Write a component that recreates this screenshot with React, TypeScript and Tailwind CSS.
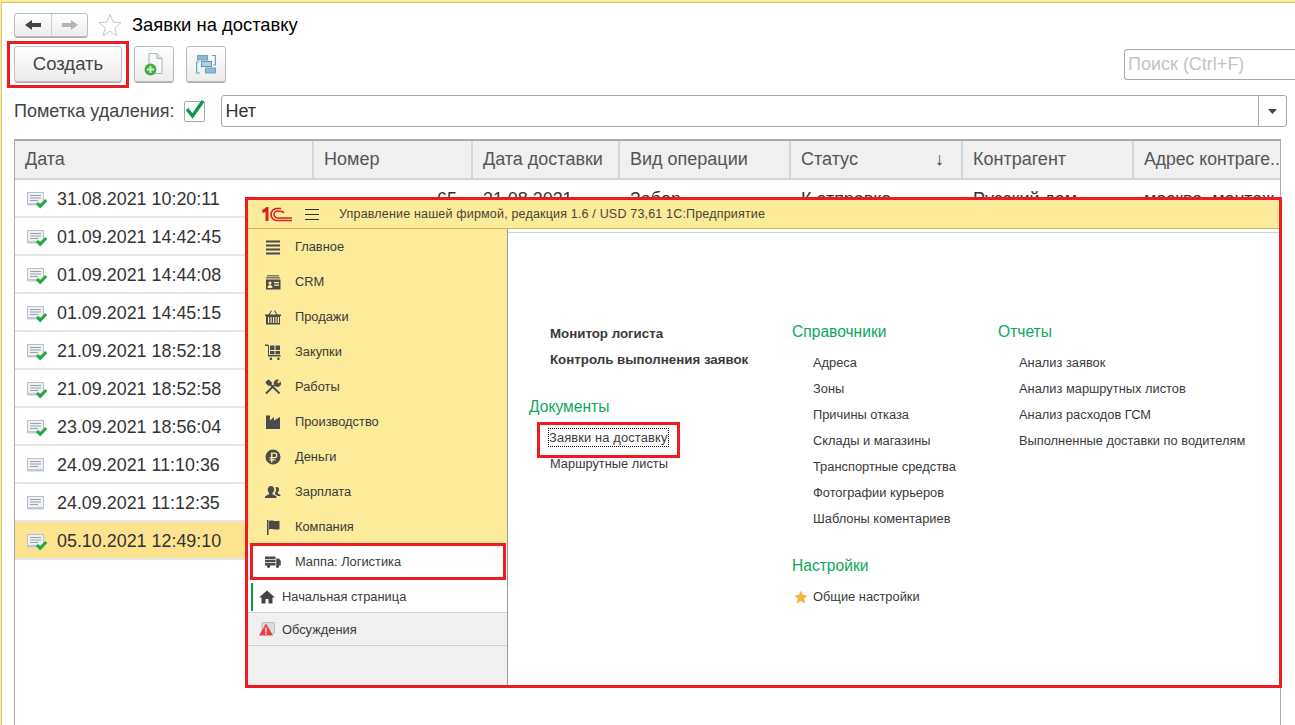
import type { ReactNode } from "react"

const font = "font-['Liberation_Sans',Arial,sans-serif]"

const rows = [
  { date: "31.08.2021 10:20:11", done: true },
  { date: "01.09.2021 14:42:45", done: true },
  { date: "01.09.2021 14:44:08", done: true },
  { date: "01.09.2021 14:45:15", done: true },
  { date: "21.09.2021 18:52:18", done: true },
  { date: "21.09.2021 18:52:58", done: true },
  { date: "23.09.2021 18:56:04", done: true },
  { date: "24.09.2021 11:10:36", done: false },
  { date: "24.09.2021 11:12:35", done: false },
  { date: "05.10.2021 12:49:10", done: true, selected: true },
]

const columns = [
  { title: "Дата", width: "w-[299px] shrink-0" },
  { title: "Номер", width: "w-[159px] shrink-0" },
  { title: "Дата доставки", width: "w-[147px] shrink-0" },
  { title: "Вид операции", width: "w-[171px] shrink-0" },
  { title: "Статус", width: "w-[172px] shrink-0", sort: true },
  { title: "Контрагент", width: "w-[171px] shrink-0" },
  { title: "Адрес контраге..", width: "min-w-0 flex-1 text-[17.6px]" },
]

function DocIcon({ done }: { done: boolean }) {
  return (
    <svg width="21" height="18" viewBox="0 0 21 18" className="mt-[2px] shrink-0">
      <rect x="0.5" y="1.5" width="16" height="12" fill="#eef1f4" stroke="#b9c1c9" />
      <rect x="1" y="12" width="16" height="2.5" fill="#c3cad1" />
      <path d="M3 4.5h11M3 7h11M3 9.500h8" stroke="#9aa3ad" strokeWidth="1" />
      {done && <path d="M10 12l3.200 3.400L19.200 9" fill="none" stroke="#27a642" strokeWidth="3" />}
    </svg>
  )
}

function ToolButton({ children }: { children: ReactNode }) {
  return (
    <button className="flex h-[36px] w-[40px] items-center justify-center rounded-[3px] border border-[#bdbdbd] bg-gradient-to-b from-white to-[#ececec] shadow-[0_1px_0_#aaa]">
      {children}
    </button>
  )
}

function Toolbar() {
  return (
    <div className="flex h-[36px] items-center pl-[14px]">
      <div className="relative">
        <button className="h-[36px] w-[108px] rounded-[3px] border border-[#bdbdbd] bg-gradient-to-b from-white to-[#ececec] text-[18.5px] text-[#444] shadow-[0_1px_0_#aaa]">
          Создать
        </button>
        <span className="absolute -left-[7px] -top-[5px] h-[47px] w-[122px] border-[3px] border-[#ed1c24]" />
      </div>
      <div className="ml-[12px]">
        <ToolButton>
          <svg width="20" height="24" viewBox="0 0 20 24">
            <path d="M5 1.500h8l5 5v15H5z" fill="#f7f8fa" stroke="#aeb6bf" />
            <path d="M13 1.500v5h5" fill="#dfe3e8" stroke="#aeb6bf" />
            <circle cx="6.500" cy="17.500" r="6" fill="#48ad45" />
            <path d="M6.500 14v7M3 17.500h7" stroke="#d8f3d4" strokeWidth="1.800" />
          </svg>
        </ToolButton>
      </div>
      <div className="ml-[12px]">
        <ToolButton>
          <svg width="20" height="20" viewBox="0 0 20 20">
            <path d="M3 8H.6v11H4M16 1.500h3.400V11H17" fill="none" stroke="#6fa3c6" strokeWidth="1.200" />
            <rect x="1.500" y="1.500" width="10" height="4.500" fill="#8fb8d3" stroke="#6fa3c6" />
            <rect x="5.500" y="7.500" width="10" height="5" fill="#b4d0e3" stroke="#5f97bd" />
            <rect x="9.500" y="14" width="10" height="5" fill="#8fb8d3" stroke="#6fa3c6" />
          </svg>
        </ToolButton>
      </div>
      <div className="ml-auto flex h-[31px] w-[171px] items-center rounded-l-[3px] border border-r-0 border-[#a8a8a8] pl-[3px] text-[18px] text-[#c4c4c4]">
        Поиск (Ctrl+F)
      </div>
    </div>
  )
}

function Table() {
  return (
    <div className="mx-[14px] mt-[12px] flex flex-1 flex-col border-x border-t-2 border-[#a9a9a9]">
      <div className="flex h-[39px] shrink-0 border-b-2 border-[#d2d2d2] bg-[#f0f0f0] text-[18px] text-[#555]">
        {columns.map((c) => (
          <div
            key={c.title}
            className={`flex items-center justify-between whitespace-nowrap border-r-2 border-[#d6d6d6] pl-[10px] pr-[17px] last:border-r-0 last:pr-0 ${c.width}`}
          >
            <span>{c.title}</span>
            {c.sort && <span className="text-[18px] text-[#444]">↓</span>}
          </div>
        ))}
      </div>
      {rows.map((r, i) => (
        <div
          key={r.date}
          className={`flex h-[38px] shrink-0 items-center border-b-2 border-[#e6e6e6] pl-[12px] pt-[2px] text-[17.9px] text-[#333] ${r.selected ? "bg-[#fde28f]" : ""}`}
        >
          <DocIcon done={r.done} />
          <span className="ml-[9px] w-[163px] whitespace-nowrap">{r.date}</span>
          {i === 0 && (
            <div className="flex flex-1 items-center whitespace-nowrap">
              <span className="w-[263px] pr-[26px] text-right">65</span>
              <span className="w-[147px]">31.08.2021</span>
              <span className="w-[171px]">Забор</span>
              <span className="w-[172px]">К отправке</span>
              <span className="w-[171px]">Русский дом</span>
              <span>москва, монтаж</span>
            </div>
          )}
        </div>
      ))}
    </div>
  )
}

type IconProps = { name: string }

function MenuIcon({ name }: IconProps) {
  const fill = "#4b4b4b"
  return (
    <svg width="16" height="16" viewBox="0 0 16 16" fill={fill}>
      {name === "main" && <path d="M1 1.500h14v2H1zM1 5.500h14v2H1zM1 9.500h14v2H1zM1 13.500h14v2H1z" />}
      {name === "crm" && (
        <>
          <path d="M2 1h12v1.500H2zM1 3h14v1.500H1z" opacity="0.7" />
          <path fillRule="evenodd" d="M1 5.500h14.500V15.500H1zM5 7.500a1.600 1.600 0 100 3.200 1.600 1.600 0 000-3.200zM2.500 14h5c0-2-1-3-2.500-3s-2.500 1-2.500 3zM9 8v1.200h5V8zM9 10.500v1.200h5v-1.200z" />
        </>
      )}
      {name === "sales" && (
        <path fillRule="evenodd" d="M3.500 5.500L6 1.500h1L4.800 5.500h6.400L9 1.500h1l2.500 4H16v1.500h-1v8.500H1V7H0V5.500zM3 8v6h1.200V8zM5.500 8v6h1.200V8zM8 8v6h1.200V8zM10.500 8v6h1.200V8zM12.800 8v6H14V8z" />
      )}
      {name === "buy" && (
        <path d="M0 0.500h3l1 1v9.500h11.500v1.500H3V2H0zM5 1.500h4.500V6H5zM10.500 1.500H15V6h-4.500zM5 7h4.500v3.200H5zM10.500 7H15v3.200h-4.500zM5.500 13.500a1.300 1.300 0 110 2.500 1.300 1.300 0 010-2.500zM13 13.500a1.300 1.300 0 110 2.500 1.300 1.300 0 010-2.500z" />
      )}
      {name === "work" && (
        <g fill="none" stroke={fill}>
          <path d="M1 14.500L9.500 6" strokeWidth="1.800" />
          <path d="M14.500 14.500L5 5" strokeWidth="1.800" />
          <path d="M1.500 2L4 .800 7 4 4 7 .800 4z" fill={fill} strokeWidth="0.500" />
          <path d="M9 5a3.500 3.500 0 014.800-4l-2 2 1.700 1.700 2-2A3.500 3.500 0 0111 7.500z" fill={fill} strokeWidth="0.500" />
        </g>
      )}
      {name === "prod" && <path d="M1 1.500h4v5L9 3v3.500l6-3.500v12H1z" />}
      {name === "money" && (
        <path fillRule="evenodd" d="M8 .500a7.500 7.500 0 110 15 7.500 7.500 0 010-15zM6 3.500V8H4.500v1.300H6v1H4.500v1.200H6V13.500h1.500v-2h3v-1.200h-3v-1h2a2.900 2.900 0 000-5.800zM7.500 4.800h2a1.600 1.600 0 010 3.200h-2z" />
      )}
      {name === "pay" && (
        <path d="M6 2a3.200 3.200 0 013.200 3.500c0 1.500-.7 2.800-1.700 3.500v1.200l3 1.500c.8.400 1 1 1 2.300H0c0-1.300.2-1.900 1-2.300l3-1.500V9C3 8.300 2.800 7 2.800 5.500A3.200 3.200 0 016 2zM11.500 3a2.500 2.500 0 012.500 2.800c0 1-.5 2-1.200 2.600v1l2 1c.6.300.7.800.7 1.600h-2.500l-3-1.800V8.600c1-1 1.500-3 .5-5.200.3-.2.600-.4 1-.4z" />
      )}
      {name === "company" && <path d="M2 1h1.500v15H2zM4 2c3-1.500 5 1 10.500-.3v8.500C9 11.500 7 9 4 10.500z" />}
      {name === "truck" && (
        <path d="M0 2.500h10.500v2.600H0zM0 5.700h10.500v2.600H0zM0 9h10.500v2.500H0zM11.200 4.500h2.800l1.800 2.500v4.500h-4.600zM3.500 10.500a1.700 1.700 0 110 3.400 1.700 1.700 0 010-3.400zM12.500 10.500a1.700 1.700 0 110 3.400 1.700 1.700 0 010-3.400z" />
      )}
    </svg>
  )
}

function Overlay() {
  const items = [
    { name: "main", label: "Главное" },
    { name: "crm", label: "CRM" },
    { name: "sales", label: "Продажи" },
    { name: "buy", label: "Закупки" },
    { name: "work", label: "Работы" },
    { name: "prod", label: "Производство" },
    { name: "money", label: "Деньги" },
    { name: "pay", label: "Зарплата" },
    { name: "company", label: "Компания" },
  ]
  return (
    <div className="absolute left-[245px] top-[197px] flex h-[491px] w-[1037px] flex-col border-[3px] border-[#ed1c24] bg-white text-[12.85px] text-[#3a3a3a]">
      <div className="flex h-[29px] shrink-0 items-center border-b border-[#c8b866] bg-[#fbeb9b] pl-[14px] text-[12.5px] text-[#4a4433]">
        <svg width="30" height="15" viewBox="0 0 30 15" fill="none">
          <path d="M.5 5L5 1.500V14" stroke="#d8232a" strokeWidth="3" />
          <path d="M19 1.500h-4a6 6 0 000 12h15" stroke="#d8232a" strokeWidth="1.700" />
          <path d="M22 6c-1-1.800-3.500-2-6.500-2a3.500 3.500 0 000 7H30" stroke="#d8232a" strokeWidth="1.500" />
        </svg>
        <svg width="14" height="13" viewBox="0 0 14 13" className="ml-[13px]">
          <path d="M0 1.500h14M0 6.500h14M0 11.500h14" stroke="#333" strokeWidth="1" />
        </svg>
        <span className="ml-[20px] whitespace-nowrap tracking-[0.18px]">
          Управление нашей фирмой, редакция 1.6 / USD 73,61 1С:Предприятие
        </span>
      </div>
      <div className="flex min-h-0 flex-1">
        <div className="flex w-[260px] shrink-0 flex-col border-r border-[#999] bg-[#f0f0f0]">
          <div className="flex flex-col bg-[#fbeb9b]">
            {items.map((it) => (
              <div key={it.name} className="flex h-[35px] items-center pl-[17px]">
                <MenuIcon name={it.name} />
                <span className="ml-[14px]">{it.label}</span>
              </div>
            ))}
          </div>
          <div className="relative -mt-[1px] ml-[2px] mr-[1px] flex h-[37px] shrink-0 items-center border-[3px] border-[#ed1c24] bg-white pl-[12px]">
            <MenuIcon name="truck" />
            <span className="ml-[14px]">Маппа: Логистика</span>
          </div>
          <div className="flex h-[33px] shrink-0 items-center border-b border-[#d2d2d2] bg-white pt-[1px]">
            <div className="ml-[3px] h-[28px] w-[2px] bg-[#0a9a4a]" />
            <svg width="16" height="14" viewBox="0 0 16 14" fill="#444" className="ml-[6px]">
              <path d="M8 .500L16 7.500h-2.500V13.500H9.500V9h-3v4.500h-4V7.500H0z" />
            </svg>
            <span className="ml-[7px]">Начальная страница</span>
          </div>
          <div className="flex h-[33px] shrink-0 items-center border-b border-[#d2d2d2] pt-[1px]">
            <svg width="16" height="15" viewBox="0 0 16 15" className="ml-[11px]">
              <rect x="3" y="0.500" width="12.500" height="11" rx="1" fill="#ddd" stroke="#bbb" />
              <path d="M7 1.500L14 13.500H0z" fill="#ee3d3d" />
              <path d="M6.300 5.500h1.400v4.500H6.300zM6.300 10.800h1.400v1.400H6.300z" fill="#fff" />
            </svg>
            <span className="ml-[7px]">Обсуждения</span>
          </div>
        </div>
        <div className="min-w-0 flex-1 pt-[3px]">
          <div className="flex h-full border-t border-[#d0d0d0] pt-[88px]">
            <Content />
          </div>
        </div>
      </div>
    </div>
  )
}

function SectionLink({ children }: { children: ReactNode }) {
  return <div className="flex h-[26px] items-center whitespace-nowrap pl-[21px]">{children}</div>
}

function SectionTitle({ children }: { children: ReactNode }) {
  return <div className="flex h-[26px] items-center text-[15.6px] text-[#0da75c]">{children}</div>
}

function Content() {
  return (
    <>
      <div className="ml-[21px] w-[263px]">
        <div className="flex h-[26px] items-center whitespace-nowrap pl-[21px] text-[13.3px] font-bold">Монитор логиста</div>
        <div className="flex h-[26px] items-center whitespace-nowrap pl-[21px] text-[13.3px] font-bold">Контроль выполнения заявок</div>
        <div className="mt-[21px]">
          <SectionTitle>Документы</SectionTitle>
        </div>
        <div className="mt-[4px]">
          <SectionLink>
            <span className="relative -ml-[2px] border border-dotted border-black leading-[17px] tracking-[0.15px]">
              Заявки на доставку
              <span className="absolute -left-[12px] -top-[7px] h-[36px] w-[143px] border-[3px] border-[#ed1c24]" />
            </span>
          </SectionLink>
        </div>
        <div className="mt-[1px]">
          <SectionLink>Маршрутные листы</SectionLink>
        </div>
      </div>
      <div className="-mt-[2px] w-[206px]">
        <SectionTitle>Справочники</SectionTitle>
        <div className="mt-[5px]">
          {["Адреса", "Зоны", "Причины отказа", "Склады и магазины", "Транспортные средства", "Фотографии курьеров", "Шаблоны коментариев"].map((t) => (
            <SectionLink key={t}>{t}</SectionLink>
          ))}
        </div>
        <div className="mt-[21px]">
          <SectionTitle>Настройки</SectionTitle>
        </div>
        <div className="mt-[5px] flex h-[26px] items-center pl-[2px]">
          <svg width="14" height="14" viewBox="0 0 14 14" fill="#fbb03b">
            <path d="M7 .500l2 4.500 4.800.400-3.600 3.200 1.100 4.800L7 10.900l-4.300 2.500 1.100-4.800L.2 5.400 5 5z" />
          </svg>
          <span className="ml-[5px]">Общие настройки</span>
        </div>
      </div>
      <div className="-mt-[2px]">
        <SectionTitle>Отчеты</SectionTitle>
        <div className="mt-[5px]">
          {["Анализ заявок", "Анализ маршрутных листов", "Анализ расходов ГСМ", "Выполненные доставки по водителям"].map((t) => (
            <SectionLink key={t}>{t}</SectionLink>
          ))}
        </div>
      </div>
    </>
  )
}

export default function App() {
  return (
    <div className={`relative h-[725px] w-[1295px] overflow-hidden bg-white ${font}`}>
      <div className="h-full border-l border-t-2 border-[#fbeb9b]">
        <div className="flex h-full flex-col border-l border-t border-[#d3c77c]">
          <div className="-ml-[2px] flex h-[43px] shrink-0 items-center py-[3px] pl-[14px]">
            <div className="flex h-[24px] w-[74px] rounded-[3px] border border-[#bdbdbd] bg-gradient-to-b from-white to-[#ececec] shadow-[0_1px_0_#aaa]">
              <div className="flex w-[37px] items-center justify-center border-r border-[#cfcfcf]">
                <svg width="16" height="12" viewBox="0 0 16 12" fill="#444"><path d="M0 6l7-5v3h9v4H7v3z" /></svg>
              </div>
              <div className="flex flex-1 items-center justify-center">
                <svg width="16" height="12" viewBox="0 0 16 12" fill="#b5b5b5"><path d="M16 6L9 1v3H0v4h9v3z" /></svg>
              </div>
            </div>
            <svg width="24" height="24" viewBox="0 0 24 24" fill="none" stroke="#c9c9c9" className="ml-[10px]">
              <path d="M12 1.500l3 7.500 8 .600-6.200 5.200 2 7.900L12 18.200l-6.800 4.500 2-7.900L1 9.600 9 9z" />
            </svg>
            <span className="ml-[10px] text-[18.4px] text-black">Заявки на доставку</span>
          </div>
          <div className="-ml-[2px]">
            <Toolbar />
          </div>
          <div className="-ml-[2px] mt-[13px] flex h-[32px] shrink-0 items-center pl-[14px] text-[18px] text-[#444]">
            <span>Пометка удаления:</span>
            <div className="ml-[10px] flex h-[21px] w-[21px] items-center justify-center rounded-[2px] border border-[#a8a8a8]">
              <svg width="22" height="20" viewBox="0 0 22 20" fill="none" className="-mt-[4px] shrink-0">
                <path d="M3 10l5.500 7L19 2" stroke="#0a9a4a" strokeWidth="3.400" />
              </svg>
            </div>
            <div className="ml-[16px] flex h-[32px] w-[1066px] items-center rounded-[3px] border border-[#a8a8a8] pl-[3px] text-[#333]">
              <span className="flex-1">Нет</span>
              <div className="flex h-full w-[28px] items-center justify-center border-l border-[#a8a8a8]">
                <svg width="9" height="5" viewBox="0 0 9 5" fill="#444"><path d="M0 0h9L4.500 5z" /></svg>
              </div>
            </div>
          </div>
          <div className="-ml-[2px] flex min-h-0 flex-1 flex-col">
            <Table />
          </div>
        </div>
      </div>
      <Overlay />
    </div>
  )
}
